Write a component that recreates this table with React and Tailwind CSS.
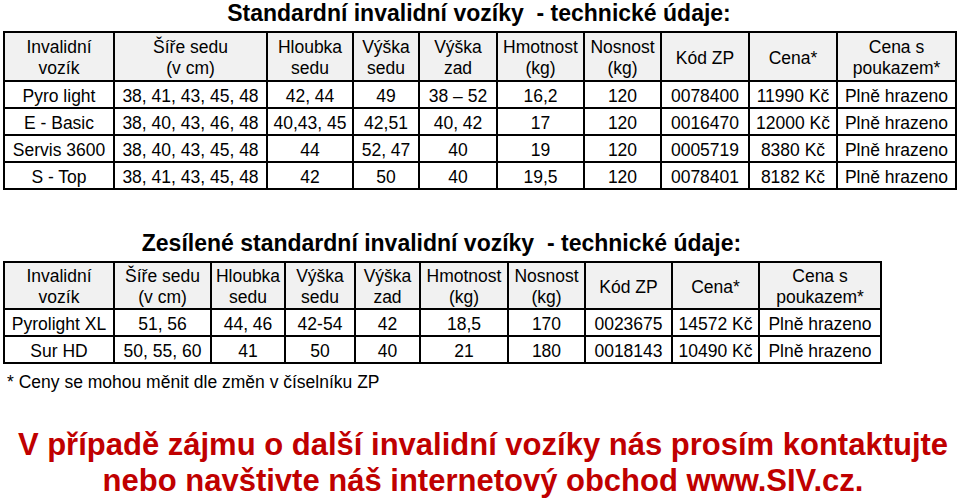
const font = { fontFamily: '"Liberation Sans", Arial, sans-serif' };

const headers = [
  ['Invalidní', 'vozík'],
  ['Šíře sedu', '(v cm)'],
  ['Hloubka', 'sedu'],
  ['Výška', 'sedu'],
  ['Výška', 'zad'],
  ['Hmotnost', '(kg)'],
  ['Nosnost', '(kg)'],
  ['Kód ZP'],
  ['Cena*'],
  ['Cena s', 'poukazem*'],
];

const standard = [
  ['Pyro light', '38, 41, 43, 45, 48', '42, 44', '49', '38 – 52', '16,2', '120', '0078400', '11990 Kč', 'Plně hrazeno'],
  ['E - Basic', '38, 40, 43, 46, 48', '40,43, 45', '42,51', '40, 42', '17', '120', '0016470', '12000 Kč', 'Plně hrazeno'],
  ['Servis 3600', '38, 40, 43, 45, 48', '44', '52, 47', '40', '19', '120', '0005719', '8380 Kč', 'Plně hrazeno'],
  ['S - Top', '38, 41, 43, 45, 48', '42', '50', '40', '19,5', '120', '0078401', '8182 Kč', 'Plně hrazeno'],
];

const reinforced = [
  ['Pyrolight XL', '51, 56', '44, 46', '42-54', '42', '18,5', '170', '0023675', '14572 Kč', 'Plně hrazeno'],
  ['Sur HD', '50, 55, 60', '41', '50', '40', '21', '180', '0018143', '10490 Kč', 'Plně hrazeno'],
];

const SpecTable = ({ title, widths, rows, headHeight }) => {
  const total = widths.reduce((a, b) => a + b, 0);
  return (
    <div style={{ width: total }}>
      <h2 className="text-center text-[23px] font-bold text-black leading-[26px] whitespace-pre">{title}</h2>
      <table className="border-collapse table-fixed text-[17.5px] text-black leading-[21px] mt-[5px]" style={{ width: total }}>
        <colgroup>
          {widths.map((w, i) => <col key={i} style={{ width: w }} />)}
        </colgroup>
        <thead>
          <tr className="bg-[#f1f1f1]" style={{ height: headHeight }}>
            {headers.map((h, i) => (
              <th key={i} className="border-2 border-black font-normal text-center px-0 pt-[3px] pb-0 whitespace-nowrap">
                {h.map((line, j) => <div key={j}>{line}</div>)}
              </th>
            ))}
          </tr>
        </thead>
        <tbody>
          {rows.map((row, r) => (
            <tr key={r} className="h-[27px] bg-white">
              {row.map((cell, c) => (
                <td key={c} className="border-2 border-black text-center px-0 pt-[3px] pb-0 whitespace-nowrap">{cell}</td>
              ))}
            </tr>
          ))}
        </tbody>
      </table>
    </div>
  );
};

export default function App() {
  return (
    <div className="w-[960px] h-[501px] bg-white overflow-hidden" style={font}>
      <div className="pl-[3px]">
        <SpecTable
          title="Standardní invalidní vozíky  - technické údaje:"
          widths={[110, 153, 86, 66, 78, 87, 77, 88, 88, 119]}
          rows={standard}
          headHeight={49}
        />
        <div className="mt-[40px]">
          <SpecTable
            title="Zesílené standardní invalidní vozíky  - technické údaje:"
            widths={[110, 97, 74, 70, 65, 88, 77, 87, 87, 122]}
            rows={reinforced}
            headHeight={46}
          />
        </div>
        <p className="text-[17.5px] text-black mt-[8px] pl-[4px] leading-[20px]">* Ceny se mohou měnit dle změn v číselníku ZP</p>
      </div>
      <div className="mt-[35px] pl-[6px] text-center text-[#c00000] font-bold text-[31px] leading-[36px]">
        <p>V případě zájmu o další invalidní vozíky nás prosím kontaktujte</p>
        <p>nebo navštivte náš internetový obchod www.SIV.cz.</p>
      </div>
    </div>
  );
}
